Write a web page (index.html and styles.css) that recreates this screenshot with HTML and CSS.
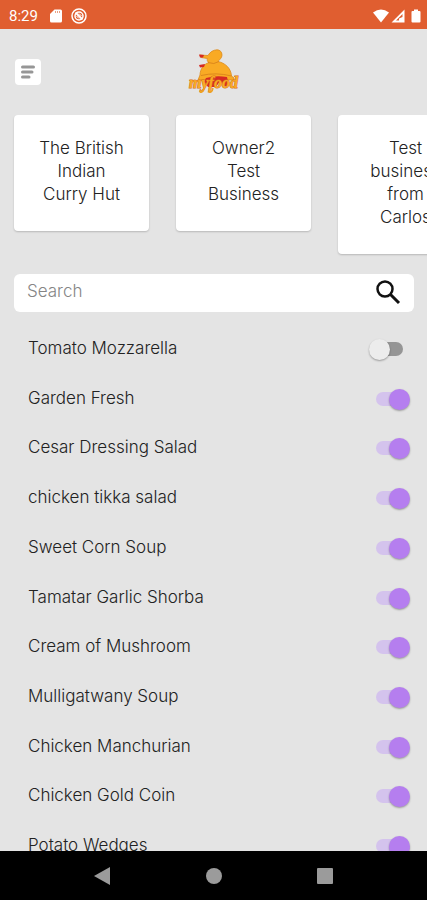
FILE: index.html
```html
<!DOCTYPE html>
<html lang="en">
<head>
<meta charset="utf-8">
<meta name="viewport" content="width=device-width, initial-scale=1">
<title>myfood</title>
<link rel="stylesheet" href="styles.css">
</head>
<body>
<header class="status">
  <span class="clock">8:29</span>
  <svg class="sd" viewBox="0 0 12 14"><path fill="#fff" d="M4.500 0.500H10.500Q12 0.500 12 2V12Q12 13.500 10.500 13.500H1.500Q0 13.500 0 12V5Z"/><path stroke="#e9a184" d="M5.500 2v2M7.500 2v2M9.500 2v2"/></svg>
  <svg class="blocked" viewBox="0 0 16 16" fill="none" stroke="#fff"><circle cx="8" cy="8" r="7" stroke-width="1.500"/><circle cx="8" cy="8" r="4" stroke-width="1.500"/><path stroke-width="2" d="M4.500 4.500l7 7"/><path d="M8 5.500l2.500 2.500M5.500 8l2.500 2.500"/></svg>
  <span class="spacer"></span>
  <svg class="wifi" viewBox="0 0 16 14"><path fill="#fff" d="M0 3.500Q8-2.500 16 3.500L8 13.500Z"/></svg>
  <svg class="signal" viewBox="0 0 14 14"><path fill="#fff" fill-rule="evenodd" d="M13.500 0.500V13.500H0.500ZM11.500 5L5 11.500h3V9.500l3.500-1.500Z"/><path fill="#fff" d="M9.500 10h1.500v2H9.500z"/></svg>
  <svg class="battery" viewBox="0 0 10 14"><path fill="#fff" d="M3 0.500h4V2h1.500Q9.500 2 9.500 3v9.500q0 1-1 1h-7q-1 0-1-1V3q0-1 1-1H3Z"/></svg>
</header>

<main class="screen">
  <div class="topbar">
    <button class="menu" type="button" aria-label="Menu">
      <svg viewBox="0 0 16 16" stroke="#969696" stroke-width="3" stroke-linecap="round"><path d="M2.500 3h11M2.500 8h9.500M2.500 13h6.500"/></svg>
    </button>
    <svg class="logo" viewBox="0 0 52 46" role="img" aria-label="myfood">
      <path fill="#f9aa24" stroke="#dc8a1e" stroke-width=".8" d="M12 6L20 6.500C22 3 25 1 29 .8C32 .8 34 3 34 6C34 9 31.500 10.500 30 12.500C37 14 43 19 43.500 27L46 29V31H10L12 26C12 20 16 15 21 13.500C19 12.500 19 11 19.500 9.500L13 8.500Z"/>
      <path fill="#d62a22" d="M11 5.500L16 6L15 8.500L12 8.500ZM11 16L17 15L16 18L12 18.500Z"/>
      <path fill="none" stroke="#d9821b" stroke-width=".9" d="M20 13.500Q26 16 31 12.500M13 26.500Q28 23 43.500 27"/>
      <path fill="#d62a22" d="M18 29Q28 26 39 28L41 37H36L32 32L28 38H20L16 33Z"/>
      <text x="1" y="39" class="wordmark">myfood</text>
      <path fill="none" stroke="#eea21f" stroke-width="1.500" d="M16 39q-1 5-4 4M25 39q-1 5-4 4"/>
    </svg>
  </div>

  <div class="cards">
    <button class="card" type="button">The British<br>Indian<br>Curry Hut</button>
    <button class="card" type="button">Owner2<br>Test<br>Business</button>
    <button class="card" type="button">Test<br>business<br>from<br>Carlos</button>
  </div>

  <form class="search">
    <input type="search" placeholder="Search" aria-label="Search">
    <button class="find" type="submit" aria-label="Search">
      <svg viewBox="0 0 26 26" fill="none" stroke="#111"><circle cx="10" cy="9" r="7.500" stroke-width="2.500"/><path stroke-width="3" d="M15.500 14.500L24 23"/></svg>
    </button>
  </form>

  <div class="items">
    <label class="item"><span>Tomato Mozzarella</span><input class="switch" type="checkbox"></label>
    <label class="item"><span>Garden Fresh</span><input class="switch" type="checkbox" checked></label>
    <label class="item"><span>Cesar Dressing Salad</span><input class="switch" type="checkbox" checked></label>
    <label class="item"><span>chicken tikka salad</span><input class="switch" type="checkbox" checked></label>
    <label class="item"><span>Sweet Corn Soup</span><input class="switch" type="checkbox" checked></label>
    <label class="item"><span>Tamatar Garlic Shorba</span><input class="switch" type="checkbox" checked></label>
    <label class="item"><span>Cream of Mushroom</span><input class="switch" type="checkbox" checked></label>
    <label class="item"><span>Mulligatwany Soup</span><input class="switch" type="checkbox" checked></label>
    <label class="item"><span>Chicken Manchurian</span><input class="switch" type="checkbox" checked></label>
    <label class="item"><span>Chicken Gold Coin</span><input class="switch" type="checkbox" checked></label>
    <label class="item"><span>Potato Wedges</span><input class="switch" type="checkbox" checked></label>
  </div>
</main>

<nav class="navbar">
  <button type="button" aria-label="Back"><svg viewBox="0 0 18 18"><path fill="#9b9b9b" d="M16 0V18L0 9Z"/></svg></button>
  <button type="button" aria-label="Home"><svg viewBox="0 0 18 18"><circle fill="#9b9b9b" cx="9" cy="9" r="8"/></svg></button>
  <button type="button" aria-label="Recents"><svg viewBox="0 0 18 18"><rect fill="#9b9b9b" x="1" y="1" width="16" height="16" rx="1"/></svg></button>
</nav>
</body>
</html>
```

FILE: styles.css
```css
* {
  box-sizing: border-box;
}

body {
  margin: 0;
  height: 100vh;
  display: flex;
  flex-direction: column;
  overflow: hidden;
  background: #e4e4e4;
  color: #222;
  font: 300 17px/24px Inter, "Open Sans", sans-serif;
}

button,
input {
  margin: 0;
  padding: 0;
  border: 0;
  font: inherit;
  color: inherit;
}

svg {
  display: block;
}

.status {
  display: flex;
  align-items: center;
  flex: none;
  height: 29px;
  padding: 3px 6px 0 9px;
  background: #e05e30;
  color: #fff;
}

.clock {
  margin-right: 12px;
  font: 400 15px/20px Roboto, sans-serif;
}

.sd {
  width: 12px;
  height: 14px;
  margin-right: 9px;
}

.blocked {
  width: 16px;
  height: 16px;
}

.spacer {
  flex: 1;
}

.wifi {
  width: 16px;
  height: 14px;
  margin-right: 2px;
}

.signal {
  width: 14px;
  height: 14px;
  margin-right: 6px;
}

.battery {
  width: 10px;
  height: 14px;
}

.screen {
  flex: 1;
  min-height: 0;
  display: flex;
  flex-direction: column;
  overflow: hidden;
}

.topbar {
  display: grid;
  grid-template-columns: 1fr auto 1fr;
  align-items: center;
  flex: none;
  height: 86px;
  padding: 0 15px;
}

.menu {
  display: grid;
  place-items: center;
  width: 26px;
  height: 26px;
  border-radius: 4px;
  background: #fff;
}

.menu svg {
  width: 16px;
  height: 16px;
}

.logo {
  width: 52px;
  height: 46px;
}

.wordmark {
  font: italic 700 16px "Liberation Serif", serif;
  fill: #f9aa24;
  stroke: #d8701c;
  stroke-width: 1px;
  paint-order: stroke;
}

.cards {
  display: flex;
  align-items: flex-start;
  flex: none;
  gap: 27px;
  padding: 0 14px 20px;
  overflow: hidden;
}

.card {
  flex: none;
  width: 135px;
  padding: 22px 0 25px;
  border-radius: 4px;
  background: #fff;
  box-shadow: 0 1px 2px #0003;
  line-height: 23px;
  text-align: center;
  white-space: nowrap;
}

.search {
  display: flex;
  align-items: center;
  flex: none;
  height: 38px;
  margin: 0 13px 12px 14px;
  padding: 0 13px;
  border-radius: 6px;
  background: #fff;
}

.search input {
  flex: 1;
  min-width: 0;
  height: 24px;
  outline: 0;
  background: none;
  margin-bottom: 4px;
}

.search input::placeholder {
  color: #858585;
  opacity: 1;
}

.find {
  background: none;
}

.find svg {
  width: 26px;
  height: 26px;
}

/* The last row runs on below the navigation bar. */
.items {
  flex: 1;
  display: flex;
  flex-direction: column;
  margin-bottom: -20px;
}

.item {
  flex: 1;
  display: flex;
  align-items: center;
  justify-content: space-between;
  padding: 0 16px 0 28px;
}

.item span {
  padding-bottom: 2px;
}

.switch {
  appearance: none;
  position: relative;
  width: 42px;
  height: 22px;
}

.switch::before {
  content: "";
  position: absolute;
  inset: 4px 8px 4px 7px;
  border-radius: 7px;
  background: #959595;
}

.switch::after {
  content: "";
  position: absolute;
  top: 1px;
  left: 0;
  width: 21px;
  height: 21px;
  border-radius: 50%;
  background: #ececec;
  box-shadow: 0 1px 2px #0005;
}

.switch:checked::before {
  background: #d4c3ed;
}

.switch:checked::after {
  left: 20px;
  background: #b57eef;
}

.navbar {
  display: flex;
  align-items: center;
  justify-content: center;
  flex: none;
  gap: 93px;
  height: 49px;
  background: #000;
}

.navbar button {
  background: none;
}

.navbar svg {
  width: 18px;
  height: 18px;
}
```
